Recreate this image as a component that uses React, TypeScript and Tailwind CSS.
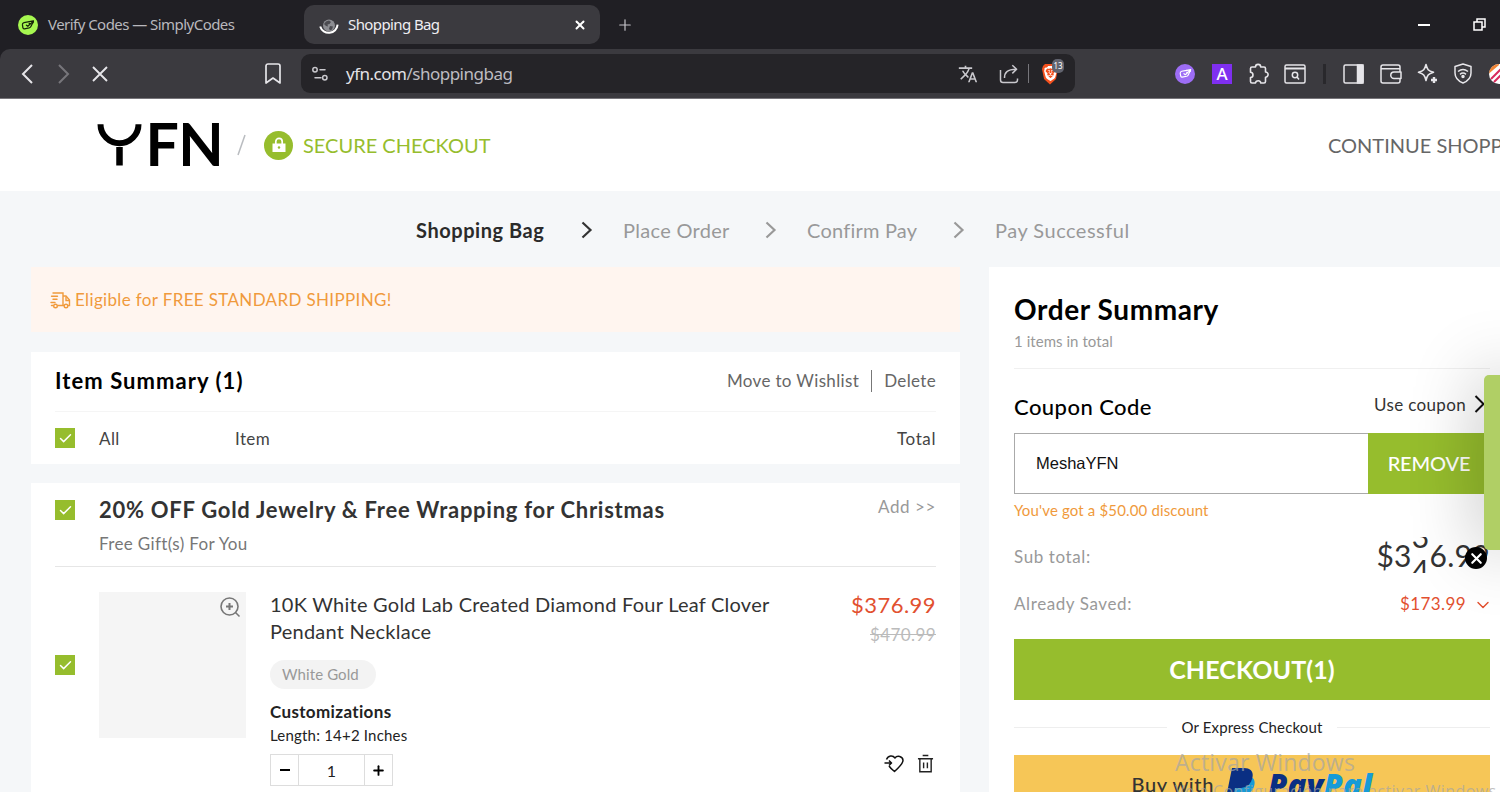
import { ChevronDown, Check, Plus, X } from 'lucide-react';
import { ReactNode } from 'react';
import { MdTranslate } from 'react-icons/md';
import { SiBrave } from 'react-icons/si';

const steps = [
  { label: 'Shopping Bag', active: true, box: 'w-[129px]', text: 'tracking-[0.55px]' },
  { label: 'Place Order', active: false, box: 'w-[106px]', text: 'tracking-[0.3px]' },
  { label: 'Confirm Pay', active: false, box: 'w-[110px]', text: 'tracking-[0.22px]' },
  { label: 'Pay Successful', active: false, box: 'w-[136px]', text: 'tracking-[0.5px]' },
];

function CodesIcon({ className }: { className: string }) {
  return (
    <svg viewBox="0 0 20 20" fill="none" stroke="currentColor" strokeWidth="1.4" strokeLinejoin="round" strokeLinecap="round" className={className}>
      <path d="M11.5 6.3 5.6 7.4c-1.3.3-1.9 1-1.8 2.2l.5 3.3c.2 1 .8 1.5 1.8 1.3l5.2-1c.9-.2 1.5-.7 1.9-1.5l2.8-5.7" />
      <path d="m8.2 10.2 1.6 1.2 6-5.4M11.5 6.3l4.5-.8M11.3 8.5l4.4-1" />
    </svg>
  );
}

function CheckBox() {
  return (
    <span className="flex h-5 w-5 shrink-0 items-center justify-center bg-[#96bd2d]">
      <Check size={15} strokeWidth={2.3} className="text-white" />
    </span>
  );
}

function TabBar() {
  return (
    <div className="flex h-[49px] shrink-0 items-center bg-[#201f24]">
      <div className="flex w-[304px] items-center gap-2.5 pl-[18px]">
        <span className="flex h-5 w-5 items-center justify-center rounded-full bg-[#a6f750]">
          <CodesIcon className="h-[18px] w-[18px] text-[#16240a]" />
        </span>
        <span className="text-[15px] tracking-[-0.54px] text-[#b9b8bd]">Verify Codes — SimplyCodes</span>
      </div>
      <div className="flex h-[39px] w-[296px] items-center rounded-[10px] bg-[#3b3a3f] pl-[15px] pr-[13px]">
        <svg viewBox="0 0 20 20" className="mr-[9px] mt-1 h-5 w-5">
          <circle cx="10" cy="8.5" r="6" fill="#8d8e93" />
          <path d="M7 4.5l3-1 2 1.5-1.5 2-2 .4L9 9.5 7 9 5 7zM11 9l3 .5-1 3-2 1-1-2z" fill="#4b4b50" />
          <path d="M1.2 9.5a8.9 8.9 0 0 0 17.4-1.8" fill="none" stroke="#fff" strokeWidth="2" />
        </svg>
        <span className="flex-1 text-[15px] tracking-[-0.6px] text-[#efeef2]">Shopping Bag</span>
        <X size={14} strokeWidth={3.4} className="text-white" />
      </div>
      <Plus size={18} strokeWidth={1.6} className="ml-4 text-[#c5c4c9]" />
      <div className="ml-auto flex items-center gap-[43px] pr-[14px] text-white">
        <span className="h-[2px] w-3 bg-white" />
        <svg viewBox="0 0 13 13" fill="none" stroke="currentColor" strokeWidth="1.5" className="h-[13px] w-[13px]">
          <path d="M1 4h8v8H1zM4 3.6V1h8v8H9.4" />
        </svg>
      </div>
    </div>
  );
}

function ToolBar() {
  return (
    <div className="shrink-0 bg-[#201f24]">
      <div className="flex h-[50px] items-center overflow-hidden rounded-tl-[10px] border-b border-[#77757a] bg-[#3b3a3f] text-[#e6e5e9] [&>*]:shrink-0">
        <svg viewBox="0 0 12 20" fill="none" stroke="currentColor" strokeWidth="2" className="ml-[21px] h-5 w-3">
          <path d="M11 1 2 10l9 9" />
        </svg>
        <svg viewBox="0 0 12 20" fill="none" stroke="#77767b" strokeWidth="2" className="ml-[25px] h-5 w-3">
          <path d="m1 1 9 9-9 9" />
        </svg>
        <svg viewBox="0 0 16 16" fill="none" stroke="currentColor" strokeWidth="1.9" className="ml-[22px] h-4 w-4">
          <path d="m1 1 14 14M15 1 1 15" />
        </svg>
        <svg viewBox="0 0 16 21" fill="none" stroke="currentColor" strokeWidth="1.7" strokeLinejoin="round" className="ml-[157px] h-[21px] w-4">
          <path d="M1 3a2 2 0 0 1 2-2h10a2 2 0 0 1 2 2v17l-7-5-7 5z" />
        </svg>

        <div className="ml-5 flex h-[39px] w-[774px] items-center rounded-[9px] bg-[#252428] pl-[11px] text-[#c9c8cd]">
          <svg viewBox="0 0 16 16" fill="none" stroke="currentColor" strokeWidth="1.5" strokeLinecap="round" className="h-4 w-4">
            <circle cx="3" cy="3.8" r="2.2" />
            <path d="M8 3.8h5M3 11.8h6" />
            <circle cx="12.8" cy="11.8" r="2.2" />
          </svg>
          <span className="ml-[18px] text-[17px] tracking-[-0.5px] text-[#bdbcc1]">
            <span className="text-[#e3e2e6]">yfn.com</span>/shoppingbag
          </span>
          <MdTranslate size={20} className="ml-auto" />
          <svg viewBox="0 0 20 20" fill="none" stroke="currentColor" strokeWidth="1.5" strokeLinejoin="round" className="ml-[21px] h-5 w-5">
            <path d="M1.5 6v10a2.500 2.500 0 0 0 2.500 2.500h12a2.500 2.500 0 0 0 2.500-2.500v-1.500" />
            <path d="M5.500 14c0-5.500 2.500-8.500 12-8.700M13.300 1.200l4.300 4.100-4.300 4.100" />
          </svg>
          <span className="ml-[9px] h-[19px] w-px bg-[#77767b]" />
          <span className="relative ml-3 mr-[16px]">
            <svg viewBox="0 0 18 22" className="h-[22px] w-[18px]">
              <path d="M4 1h10l2 2 1 3-2 10-6 5.500-6-5.500L1 6l1-3z" fill="#f4511e" />
            </svg>
            <SiBrave size={15} className="absolute left-[1.500px] top-[3px] text-white" />
            <span className="absolute -top-[4px] left-[11px] flex h-[14px] w-3 items-center justify-center rounded-[5px] bg-[#62646f] text-[8px] text-white">13</span>
          </span>
        </div>

        <span className="ml-[100px] flex h-5 w-5 items-center justify-center rounded-full bg-[#9d6df5]">
          <CodesIcon className="h-[17px] w-[17px] text-white" />
        </span>
        <span className="ml-[17px] flex h-5 w-5 items-center justify-center bg-[#7f2ff0] text-[17px] font-medium text-white">A</span>
        <svg viewBox="0 0 22 22" fill="none" stroke="currentColor" strokeWidth="1.600" strokeLinejoin="round" className="ml-4 h-[22px] w-[22px]">
          <path d="M2.500 5.500a1.500 1.500 0 0 1 1.500-1.500h3.500a2.600 2.600 0 1 1 5.200 0H16a1.500 1.500 0 0 1 1.500 1.500V9a2.600 2.600 0 1 1 0 5.200v4.300A1.500 1.500 0 0 1 16 20h-3.300c.2-3-4.900-3-5.200 0H4a1.500 1.500 0 0 1-1.500-1.500v-4c3.300-.2 3.300-4.900 0-5.200z" />
        </svg>
        <svg viewBox="0 0 22 20" fill="none" stroke="currentColor" strokeWidth="1.500" className="ml-[14px] h-5 w-[22px]">
          <rect x="1" y="1" width="20" height="18" rx="1.500" />
          <path d="M1 4.500h20" strokeWidth="2" />
          <circle cx="11" cy="11" r="2.700" />
          <path d="m13 13 2 2.500" />
        </svg>
        <span className="ml-[17px] h-5 w-[3px] bg-[#29282c]" />
        <svg viewBox="0 0 21 20" fill="none" stroke="currentColor" strokeWidth="1.500" className="ml-[17px] h-5 w-[21px]">
          <rect x="1" y="1" width="19" height="18" rx="1.500" />
          <path d="M14.500 1H20v18h-5.500z" fill="currentColor" />
        </svg>
        <svg viewBox="0 0 22 20" fill="none" stroke="currentColor" strokeWidth="1.500" strokeLinejoin="round" className="ml-4 h-5 w-[22px]">
          <path d="M20 8V3a2 2 0 0 0-2-2H3a2 2 0 0 0-2 2v14a2 2 0 0 0 2 2h15a2 2 0 0 0 2-2v-2.500M1 4.800h19" />
          <path d="M21 8h-7a3 3 0 0 0 0 6.500h7z" />
        </svg>
        <svg viewBox="0 0 21 21" fill="none" stroke="currentColor" strokeWidth="1.600" strokeLinejoin="round" className="ml-[15px] h-[21px] w-[21px]">
          <path d="M9 1.500c1.300 5 2 6.200 7.500 7.800-5.500 1.700-6.200 2.800-7.500 8.200-1.300-5.400-2.200-6.500-7.500-8.200C6.800 7.700 7.700 6.500 9 1.500z" />
          <path d="M17 14v6M14 17h6" strokeWidth="2.400" />
        </svg>
        <svg viewBox="0 0 18 21" fill="none" stroke="currentColor" strokeWidth="1.500" strokeLinejoin="round" className="ml-4 h-[21px] w-[18px]">
          <path d="M9 1 1 3.500V10c0 5 3 8 8 10 5-2 8-5 8-10V3.500z" />
          <path d="M4 8.500c3-2.500 7-2.500 10 0M6 11.300c2-1.600 4-1.600 6 0" />
          <circle cx="9" cy="13.500" r="1" fill="currentColor" />
        </svg>
        <svg viewBox="0 0 20 20" className="ml-[17px] h-5 w-5">
          <circle cx="10" cy="10" r="10" fill="#fff" />
          <path d="M0 9.500A10 10 0 0 1 10 0v1z" fill="#f08334" />
          <path d="m2 15 13-13M5 18 18 5" stroke="#d82a5c" strokeWidth="2" />
        </svg>
      </div>
    </div>
  );
}

function SiteHeader() {
  return (
    <header className="flex h-[92px] shrink-0 items-center bg-white pl-[97px]">
      <svg viewBox="0 0 126 44" className="h-11 w-[126px]">
        <path d="M3.500 1.200a19 19 0 0 0 38 0" fill="none" stroke="#000" strokeWidth="6" />
        <path d="M22.500 24v18.500" stroke="#000" strokeWidth="6.500" />
        <text x="48.500 81.300" y="42.500" fontSize="59" fontWeight="700" fill="#000">FN</text>
      </svg>
      <svg viewBox="0 0 9 22" className="ml-[14px] h-[22px] w-[9px]">
        <path d="M8 1 1 21" stroke="#b9bcc0" strokeWidth="1.500" />
      </svg>
      <span className="ml-[18px] flex h-[29px] w-[29px] items-center justify-center rounded-full bg-[#96bd2d]">
        <svg viewBox="0 0 14 16" className="h-4 w-[14px]">
          <path d="M3.800 7V4.500a3.200 3.200 0 0 1 6.400 0V7" fill="none" stroke="#fff" strokeWidth="1.700" />
          <path d="M.5 6.500h13V15H.5z" fill="#fff" />
          <circle cx="7" cy="10.500" r="1.200" fill="#96bd2d" />
        </svg>
      </span>
      <span className="ml-[10px] text-xl text-[#96bd2d]">SECURE CHECKOUT</span>
      <span className="ml-auto w-[172px] whitespace-nowrap text-xl text-[#666]">CONTINUE SHOPPING</span>
    </header>
  );
}

function Steps() {
  return (
    <div className="flex h-[76px] shrink-0 items-center pl-[416px] pt-px">
      {steps.map((step, index) => (
        <div key={step.label} className="flex items-center">
          {index > 0 && (
            <svg viewBox="0 0 12 18" fill="none" strokeWidth="2.200" className={`ml-9 mr-[30px] h-[18px] w-3 ${index === 1 ? 'stroke-[#333]' : 'stroke-[#999]'}`}>
              <path d="m1.500 1.500 8 7.500-8 7.500" />
            </svg>
          )}
          <span className={`${step.box} ${step.text} whitespace-nowrap text-xl ${step.active ? 'font-bold text-[#2b2b2b]' : 'text-[#999]'}`}>
            {step.label}
          </span>
        </div>
      ))}
    </div>
  );
}

function ShippingBanner() {
  return (
    <div className="flex h-[65px] shrink-0 items-center bg-[#fff5ef] pl-[19px] pt-px text-[#f09a3c]">
      <svg viewBox="0 0 21 17" fill="none" stroke="currentColor" strokeWidth="1.400" strokeLinecap="round" className="h-[17px] w-[21px]">
        <path d="M3 1h10v12.500H8M13 4h3l3.500 4v5.500h-1M14 13.500h-1M1.500 4.200h6M3 7.300h4M1 10.500h4M1.500 13.500H3" />
        <path d="M16 5v3.500h3" />
        <circle cx="5.500" cy="14" r="1.800" />
        <circle cx="16" cy="14" r="1.800" />
      </svg>
      <span className="ml-1 text-[17px] tracking-[0.35px]">Eligible for FREE STANDARD SHIPPING!</span>
    </div>
  );
}

function ItemSummary() {
  return (
    <section className="mt-5 h-[112px] shrink-0 bg-white px-6">
      <div className="flex h-[60px] items-center border-b border-[#f5f5f5] pb-0.5">
        <h2 className="text-[22px] font-bold tracking-[1.06px] text-black">Item Summary (1)</h2>
        <span className="ml-auto text-[17px] tracking-[0.35px] text-[#666]">Move to Wishlist</span>
        <span className="mx-3 h-[22px] w-px bg-[#777]" />
        <span className="text-[17px] tracking-[0.35px] text-[#666]">Delete</span>
      </div>
      <div className="flex h-[52px] items-center text-[17px] tracking-[0.4px] text-[#444]">
        <CheckBox />
        <span className="ml-6 mt-0.5 w-[136px]">All</span>
        <span className="mt-0.5">Item</span>
        <span className="ml-auto mt-0.5 tracking-[0.6px]">Total</span>
      </div>
    </section>
  );
}

function BagItem() {
  return (
    <div className="flex pt-[25px]">
      <div className="mt-[63px]">
        <CheckBox />
      </div>
      <div className="ml-6 h-[146px] w-[147px] bg-[#f5f5f5] pl-[121px] pt-[5px]">
        <svg viewBox="0 0 21 21" fill="none" stroke="#777" strokeWidth="1.600" className="h-[21px] w-[21px]">
          <circle cx="9.500" cy="9.500" r="8.500" />
          <path d="m15.500 15.500 4 4" />
          <path d="M9.500 6v7M6 9.500h7" strokeWidth="2" />
        </svg>
      </div>
      <div className="-mt-px ml-6 w-[530px]">
        <p className="text-[20px] leading-[27px] tracking-[0.24px] text-[#333]">
          10K White Gold Lab Created Diamond Four Leaf Clover
          <br />
          Pendant Necklace
        </p>
        <div className="mt-[15px] flex h-[29px] w-[106px] items-center rounded-full bg-[#f3f3f3] pl-3 text-[15px] tracking-[0.1px] text-[#999]">
          White Gold
        </div>
        <p className="mt-3 text-[17px] font-bold leading-[22px] tracking-[0.35px] text-[#222]">Customizations</p>
        <p className="mt-[2px] text-[15px] leading-5 tracking-[0.2px] text-[#222]">Length: 14+2 Inches</p>
        <div className="mt-[9px] flex h-8 w-[123px] items-center border border-[#ddd] text-center">
          <span className="flex w-[27px] justify-center"><span className="h-0.5 w-[10px] bg-black" /></span>
          <span className="h-full w-[67px] border-x border-[#ddd] text-[16px] leading-[31px] text-[#222]">1</span>
          <span className="flex w-[27px] justify-center"><Plus size={15} strokeWidth={3} /></span>
        </div>
      </div>
      <div className="-mt-px ml-auto flex flex-col items-end">
        <span className="text-[22px] leading-7 tracking-[0.45px] text-[#e2502f]">$376.99</span>
        <span className="mt-1 text-[17px] leading-6 tracking-[0.4px] text-[#bbb] line-through">$470.99</span>
        <div className="mr-0.5 mt-[107px] flex items-center gap-[13px]">
          <svg viewBox="0 0 20 19" fill="none" stroke="#111" strokeWidth="1.500" strokeLinejoin="round" className="h-[19px] w-5">
            <path d="M2.500 5.500C4 1 9 1 11 4c2-3 8-2 8 2.500 0 3-3 6-8.500 11C8 15.500 6 13.500 5 12" />
            <path d="M.5 9h6.500M5 6.500 7.500 9 5 11.500" />
          </svg>
          <svg viewBox="0 0 18 19" fill="none" stroke="#222" strokeWidth="1.500" className="h-[19px] w-[17px]">
            <path d="M6 1h6M1 4.500h16M3 4.500v13.700h12V4.500M7 8.500v6M11 8.500v6" />
          </svg>
        </div>
      </div>
    </div>
  );
}

function BagItems() {
  return (
    <section className="mt-[19px] min-h-0 flex-1 bg-white px-6">
      <div className="h-[84px] border-b border-[#e6e6e6] pt-[11px]">
        <div className="flex h-8 items-center">
          <CheckBox />
          <h3 className="mb-0.5 ml-6 whitespace-nowrap text-[22px] font-bold tracking-[0.73px] text-[#333]">20% OFF Gold Jewelry &amp; Free Wrapping for Christmas</h3>
          <span className="mb-1.5 ml-auto text-[17px] tracking-[0.6px] text-[#999]">Add &gt;&gt;</span>
        </div>
        <p className="ml-11 mt-1.5 text-[17px] leading-6 tracking-[0.36px] text-[#777]">Free Gift(s) For You</p>
      </div>
      <BagItem />
    </section>
  );
}

function Row({ label, children }: { label: string; children: ReactNode }) {
  return (
    <div className="flex h-[47px] items-center">
      <span className="mb-0.5 text-[17px] tracking-[0.6px] text-[#999]">{label}</span>
      <div className="ml-auto flex items-center">{children}</div>
    </div>
  );
}

function OrderSummary() {
  return (
    <aside className="ml-[29px] w-[511px] bg-white pl-[25px] pr-[10px]">
      <div className="h-[102px] border-b border-[#f0f0f0] pt-6">
        <h2 className="text-[28px] font-bold leading-9 tracking-[0.6px] text-black">Order Summary</h2>
        <p className="mt-1 text-[15px] leading-5 tracking-[0.05px] text-[#999]">1 items in total</p>
      </div>
      <div className="flex h-16 items-center pt-2.5">
        <h3 className="text-[22px] font-medium tracking-[0.45px] text-black">Coupon Code</h3>
        <span className="mb-0.5 ml-auto text-[17px] tracking-[0.35px] text-[#333]">Use coupon</span>
        <svg viewBox="0 0 12 18" fill="none" stroke="#111" strokeWidth="2" className="mb-1 ml-2 mr-1 h-[18px] w-3">
          <path d="m1.500 1 8 8-8 8" />
        </svg>
      </div>
      <div className="flex h-[61px]">
        <div className="flex w-[354px] items-center border border-r-0 border-[#aaa] pl-[21px] font-['Liberation_Sans'] text-[16.500px] text-[#111]">
          MeshaYFN
        </div>
        <button className="w-[122px] bg-[#96bd2d] pb-0.5 text-[20px] font-medium tracking-[-0.15px] text-white">REMOVE</button>
      </div>
      <p className="h-10 pt-1.5 text-[15px] leading-5 tracking-[0.15px] text-[#f09a3c]">You've got a $50.00 discount</p>
      <Row label="Sub total:">
        <div className="mb-1.5 flex h-9 overflow-hidden text-[30px] leading-9 tracking-[0.3px] text-[#333]">
          <span>$3</span>
          <span className="flex flex-col">
            <span className="-mt-[19px] h-[34px]">3</span>
            <span>4</span>
          </span>
          <span>6.99</span>
        </div>
      </Row>
      <Row label="Already Saved:">
        <span className="mb-0.5 text-[17px] tracking-[0.4px] text-[#e2502f]">$173.99</span>
        <ChevronDown size={20} strokeWidth={1.700} className="-mr-[3px] ml-[7px] text-[#e2502f]" />
      </Row>
      <button className="mt-[11px] h-[61px] w-full bg-[#96bd2d] text-[25px] font-bold tracking-[0.1px] text-white">CHECKOUT(1)</button>
      <div className="flex h-[55px] items-center justify-between">
        <span className="h-px w-[153px] bg-[#eee]" />
        <span className="text-[15px] tracking-[0.15px] text-[#222]">Or Express Checkout</span>
        <span className="h-px w-[153px] bg-[#eee]" />
      </div>
      <div className="flex h-[61px] items-center justify-center bg-[#f6c657]">
        <span className="mb-1 text-[20px] font-medium tracking-[0.6px] text-[#333]">Buy with</span>
        <svg viewBox="0 0 30 36" className="ml-3 h-9 w-[30px]">
          <path d="M10 9h15c5 2 4 8 2 12-2 4-6 5-12 5l-2 9H5z" fill="#169bd7" />
          <path d="M6 0h12c8 0 10 5 8 11-2 7-7 9-13 9H9l-2 10H0z" fill="#0a2f83" />
        </svg>
        <span className="ml-3 font-['Open_Sans'] text-[31px] font-extrabold italic tracking-[0.2px] text-[#0a2f83]">
          Pay<span className="text-[#169bd7]">Pal</span>
        </span>
      </div>
    </aside>
  );
}

export default function App() {
  return (
    <div className="relative flex h-[792px] w-[1500px] flex-col overflow-hidden bg-[#f5f7f9] font-['Lato',sans-serif]">
      <div className="shrink-0 font-['Noto_Sans',sans-serif]">
        <TabBar />
        <ToolBar />
      </div>
      <SiteHeader />
      <Steps />
      <main className="flex min-h-0 flex-1 pl-[31px]">
        <div className="flex w-[929px] flex-col">
          <ShippingBanner />
          <ItemSummary />
          <BagItems />
        </div>
        <OrderSummary />
      </main>

      <div className="absolute left-[1484px] top-[375px] h-[175px] w-10 rounded-l-[5px] bg-[#b0cf65] shadow-[0_0_70px_rgba(0,0,0,0.3)]" />
      <div className="absolute left-[1465px] top-[547px] flex h-[22px] w-[22px] items-center justify-center rounded-full bg-black">
        <X size={17} strokeWidth={3} className="text-white" />
      </div>
      <div className="absolute left-[1175px] top-[746px] whitespace-nowrap font-['Open_Sans',sans-serif] text-[#a5a5a5]/70">
        <p className="text-[23px] leading-8 tracking-[0.2px]">Activar Windows</p>
        <p className="text-[16px] leading-[26px] tracking-[0.45px]">Ve a Configuración para activar Windows.</p>
      </div>
    </div>
  );
}
